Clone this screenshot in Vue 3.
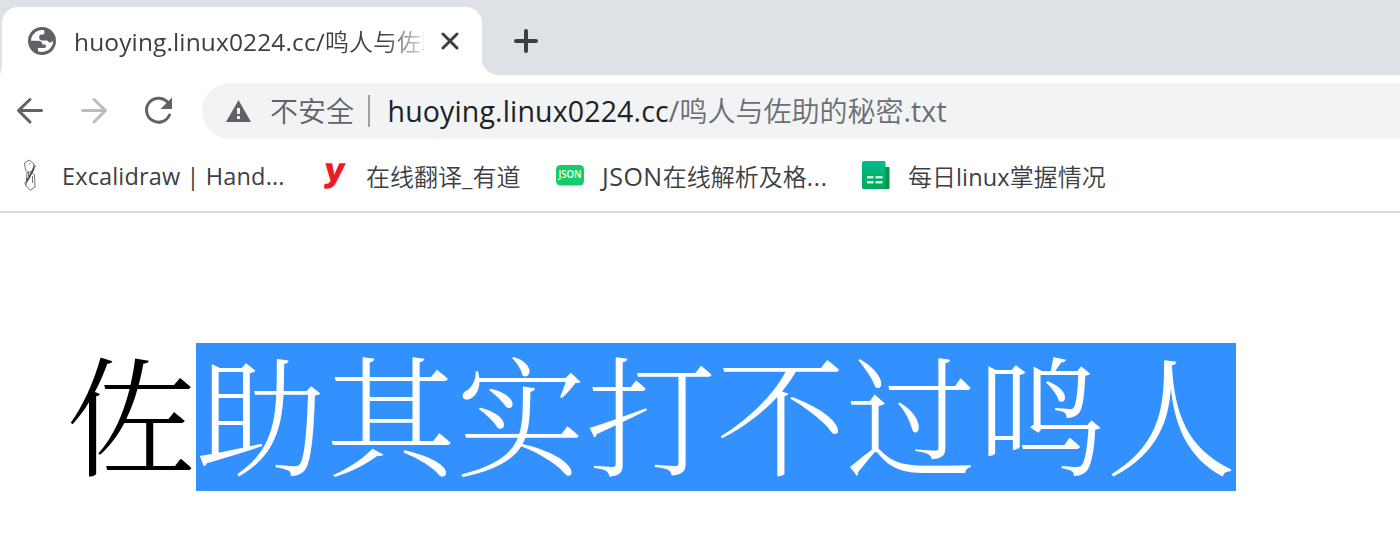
<script setup>
const bookmarks = [
  { id: 'excalidraw', runs: [['Excalidraw | Hand...', 'latin']] },
  { id: 'youdao', runs: [['在线翻译', 'han'], ['_', 'latin'], ['有道', 'han']] },
  { id: 'json', runs: [['JSON', 'latin caps'], ['在线解析及格', 'han'], ['...', 'latin dots']] },
  { id: 'sheet', runs: [['每日', 'han'], ['linux', 'latin'], ['掌握情况', 'han']] },
]
</script>

<template>
  <div class="browser">
    <header class="tabstrip">
      <svg width="2" height="68"><path d="M2 55V68H0C1 65 2 62 2 55Z" fill="#fff" /></svg>
      <div class="tab">
        <svg width="28" height="28" viewBox="0 0 28 28">
          <circle cx="14" cy="14" r="14" fill="#5f6368" />
          <path d="M15.800 3C8.500 2.400 3.400 7.500 3 13.700H9.700C12.800 13.700 14.400 15 14.400 17.400V17.600H17.800V19.500C17.800 20.500 17 21 16 21H10V24.300C18 27 25.500 21 25.100 13.600C23.800 15.800 21.700 16 20.600 14.900C19.600 13.800 19.400 13.500 17.800 13.500H14C12 13.500 11.300 12.500 11.300 11V9.500C11.300 8.300 12 7.500 13.200 7.500H14.800C16 7.500 16.400 6.800 16.400 5.800C16.400 4.500 16.200 4 15.800 3Z" fill="#fff" />
        </svg>
        <div class="title"><span class="latin">huoying.linux0224.cc/</span><span class="han">鸣人与佐助</span></div>
        <svg class="close" width="18" height="18" viewBox="0 0 18 18"><path d="M2 2L16 16M16 2L2 16" stroke="#3c4043" stroke-width="3" stroke-linecap="round" /></svg>
      </div>
      <svg width="16" height="68"><path d="M0 52V68H16A16 16 0 0 1 0 52Z" fill="#fff" /></svg>
      <svg class="plus" width="24" height="24" viewBox="0 0 24 24"><path d="M12 2V22M2 12H22" stroke="#3c4043" stroke-width="4" stroke-linecap="round" /></svg>
    </header>
    <nav class="toolbar">
      <svg class="nav back" width="28" height="28" viewBox="0 0 28 28"><path d="M25.500 13.500H3M14 2.500L2.500 13.500L14 25" /></svg>
      <svg class="nav forward" width="28" height="28" viewBox="0 0 28 28"><path d="M2.500 13.500H25M14 2.500L25.500 13.500L14 25" /></svg>
      <svg class="reload" width="30" height="30" viewBox="0 0 30 30">
        <path d="M24.300 7.200A12 12 0 1 0 25.500 19" fill="none" stroke="#5f6368" stroke-width="3" stroke-linecap="round" />
        <path d="M28 1.500V13H16.500Z" fill="#5f6368" />
      </svg>
      <div class="omnibox">
        <svg width="26" height="22" viewBox="0 0 26 22"><path d="M12.500 0L25 22H0Z" fill="#5f6368" /><path d="M11 8H14V14H11ZM11 16H14V19H11Z" fill="#f1f3f4" /></svg>
        <span class="insecure">不安全</span>
        <i class="divider"></i>
        <div class="url"><span class="latin host">huoying.linux0224.cc</span><span class="latin">/</span><span class="han">鸣人与佐助的秘密</span><span class="latin">.txt</span></div>
      </div>
    </nav>
    <nav class="bookmarks">
      <div v-for="b in bookmarks" :key="b.id" class="bookmark" :class="b.id">
        <svg v-if="b.id === 'excalidraw'" width="28" height="32" viewBox="0 0 28 32" fill="none" stroke="#444" stroke-width=".75">
          <path d="M13 1L8.500 4L9.500 11L11.500 13H16.500L18 5ZM13 4.500H14M11 13L10.500 21M12.500 13V17M16.500 17V24M19 6L8.500 25M19.500 7L9.500 26M16.500 13L10 24M10 25V27L14.500 31L19 28L18.500 16L16.500 14" /><path d="M18 10L11 22" stroke-width="1.100" />
        </svg>
        <svg v-else-if="b.id === 'youdao'" class="youdao-icon" width="28" height="32" viewBox="0 0 28 32">
          <text x="6" y="21.500" class="ymark" textLength="20.500" lengthAdjust="spacingAndGlyphs">y</text>
        </svg>
        <svg v-else-if="b.id === 'json'" width="28" height="32" viewBox="0 0 28 32">
          <rect y="6" width="28" height="20.500" rx="4.500" fill="#13ce66" />
          <text x="14" y="19.300" class="jmark" text-anchor="middle" textLength="23" lengthAdjust="spacingAndGlyphs">JSON</text>
        </svg>
        <svg v-else width="28" height="32" viewBox="0 0 28 32">
          <defs><linearGradient id="sheet-fill" x2="0" y2="1"><stop stop-color="#00bd8b" /><stop offset="1" stop-color="#00a957" /></linearGradient></defs>
          <path d="M20 8H26.500Q27.500 8 27.500 9V29Q27.500 30 26.500 30H20Z" fill="#00994b" />
          <path d="M2 2H22.500Q23.500 2 23.500 3V30H1.500Q0 30 0 28.500V3.500Q0 2 2 2Z" fill="url(#sheet-fill)" />
          <path d="M5 17H11.500V19.500H5ZM13.500 17H20.500V19.500H13.500ZM5 22H11.500V24.500H5ZM13.500 22H20.500V24.500H13.500Z" fill="#c6f4df" />
        </svg>
        <div class="label"><span v-for="(r, i) in b.runs" :key="i" :class="r[1]">{{ r[0] }}</span></div>
      </div>
    </nav>
    <main class="page"><span>佐</span><span class="selected">助其实打不过鸣人</span></main>
  </div>
</template>

<style>
body { margin: 0; background: #fff; }
</style>

<style scoped>
.browser { width: 1400px; height: 544px; overflow: hidden; background: #fff; font-family: "Open Sans", "Noto Sans CJK SC", sans-serif; }
.browser svg { display: block; flex: none; }
.tabstrip { display: flex; height: 68px; padding-top: 7px; background: #dee1e6; }
.tab { display: flex; align-items: center; box-sizing: border-box; width: 480px; height: 68px; padding-left: 26px; background: #fff; border-radius: 16px 16px 0 0; }
.title { display: flex; align-items: baseline; width: 350px; height: 34px; margin-left: 18px; line-height: 34px; overflow: hidden; white-space: nowrap; color: #3c4043; -webkit-mask-image: linear-gradient(90deg, #000 310px, transparent 358px); mask-image: linear-gradient(90deg, #000 310px, transparent 358px); }
.latin { font-size: 23.500px; letter-spacing: .15px; white-space: pre; }
.title .latin { font-size: 24.500px; letter-spacing: .13px; }
.han { font-family: "Noto Sans CJK SC", sans-serif; font-size: 24px; font-weight: 350; }
.label .caps { font-size: 25px; letter-spacing: .5px; }
.label .dots { letter-spacing: .9px; }
.close { margin-left: 17px; }
.plus { margin: 22px 0 0 16px; }
.toolbar { display: flex; align-items: center; height: 72px; }
.nav { fill: none; stroke: #5f6368; stroke-width: 3; stroke-linecap: round; stroke-linejoin: round; }
.back { margin-left: 16px; }
.forward { margin-left: 36px; stroke: #babcbe; }
.reload { margin-left: 36px; }
.omnibox { display: flex; align-items: center; height: 56px; width: 1198px; margin-left: 28px; box-sizing: border-box; padding-left: 24px; border-radius: 28px 0 0 28px; background: #f1f3f4; }
.insecure { margin-left: 18px; font: 350 28px/42px "Noto Sans CJK SC", sans-serif; color: #5f6368; height: 44px; }
.divider { width: 2px; height: 32px; margin-left: 14px; background: #9aa0a6; }
.url { display: flex; align-items: baseline; margin-left: 17.500px; height: 42px; line-height: 40px; color: #6b6e72; }
.url .latin { font-size: 28.500px; letter-spacing: .15px; }
.url .host { color: #202124; }
.url .han { font-size: 28px; }
.bookmarks { display: flex; height: 64px; border-bottom: 2px solid #dadada; }
.bookmark { display: flex; align-items: flex-start; padding-top: 12px; }
.label { display: flex; align-items: baseline; margin-left: 18px; line-height: 34px; white-space: nowrap; color: #3c4043; }
.excalidraw { width: 304px; padding-left: 16px; }
.youdao { width: 236px; }
.browser .youdao-icon { overflow: visible; }
.json { width: 306px; }
.ymark { font: 800 32px "Open Sans", sans-serif; fill: #ed1c24; transform: skewX(-7deg); }
.jmark { font: 600 10px "Open Sans", sans-serif; fill: #fff; }
.page { display: flex; padding: 130px 0 0 66px; font: 300 130px/134px "Noto Serif CJK SC", "Noto Sans CJK SC", serif; color: #000; }
.selected { height: 148px; width: 1040px; background: #3390ff; color: #fff; }
</style>
